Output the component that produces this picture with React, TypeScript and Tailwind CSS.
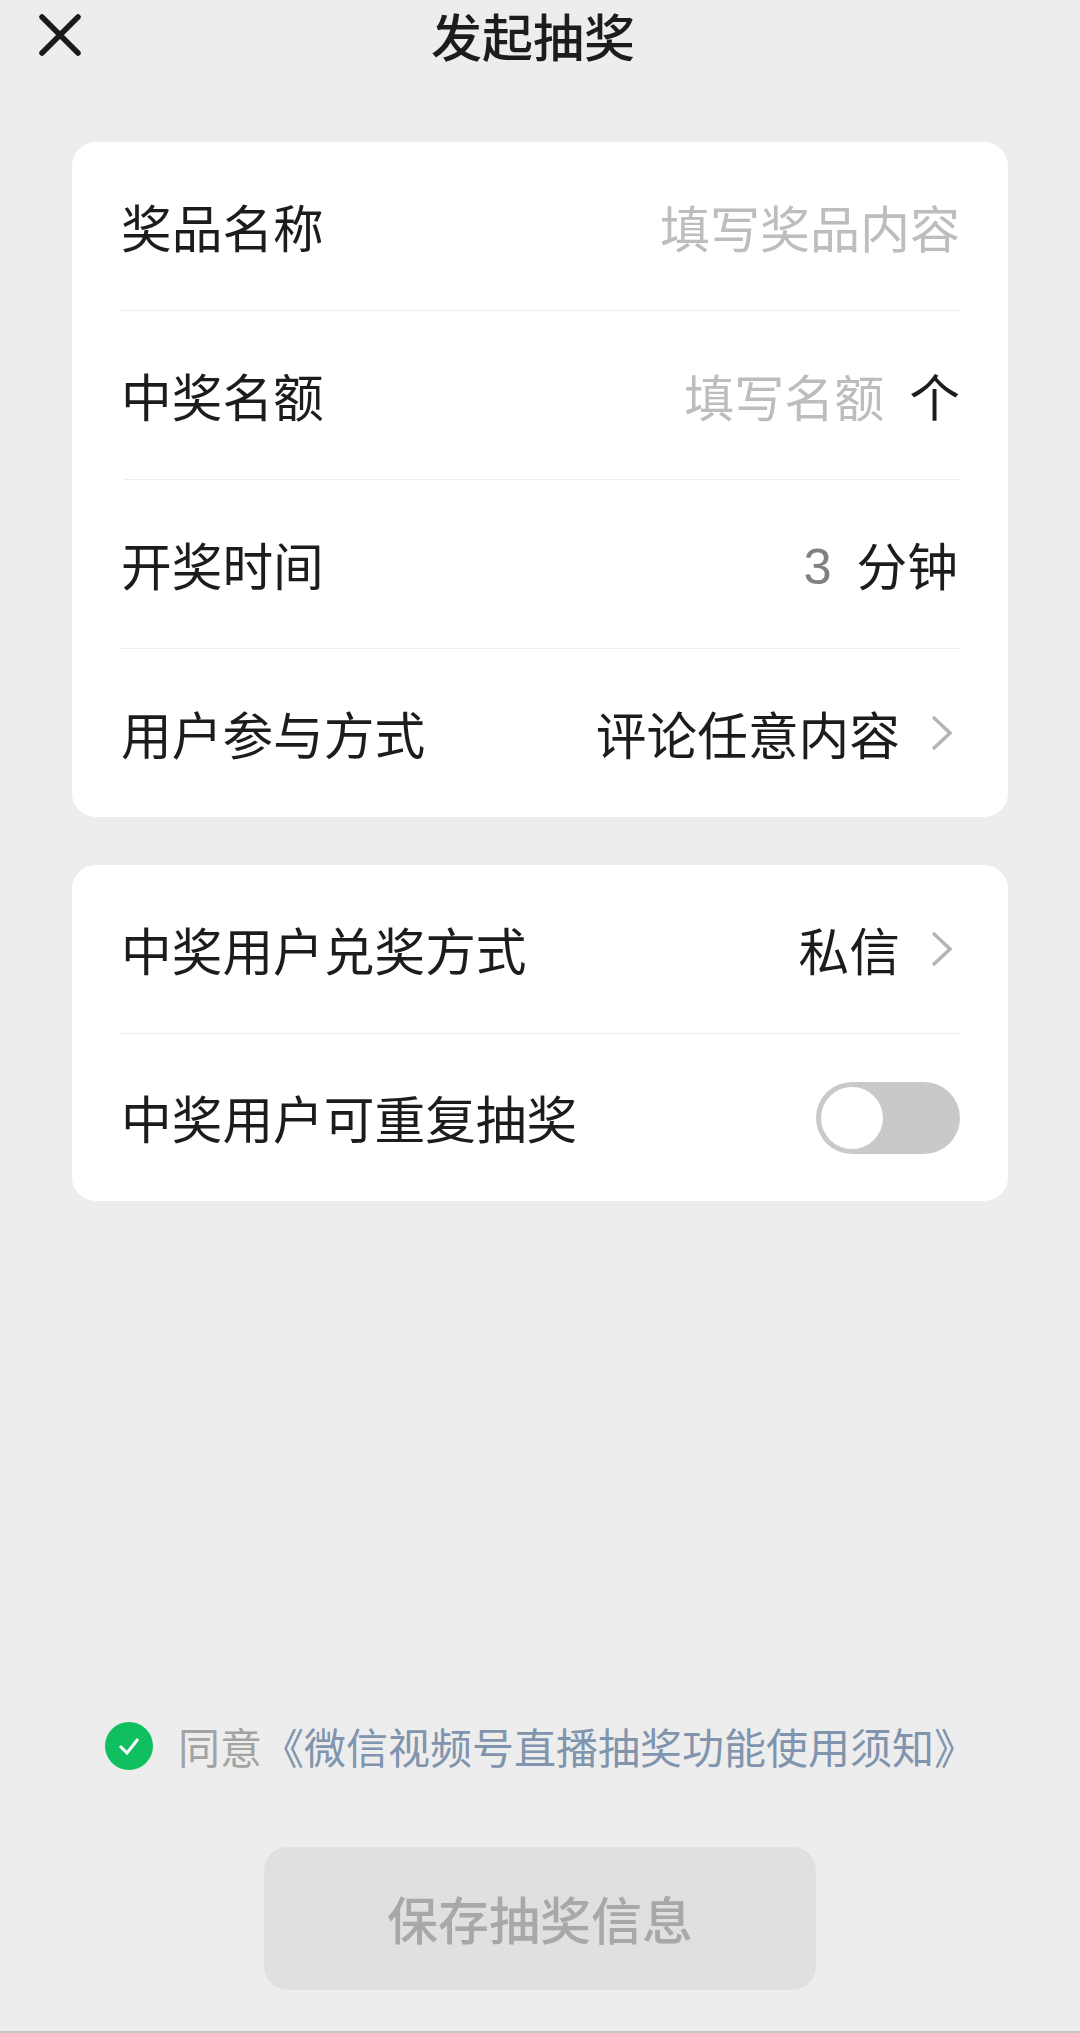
const font = { fontFamily: '"Noto Sans CJK SC", "Noto Sans", sans-serif' };

function Chevron() {
  return (
    <svg width="24" height="38" viewBox="0 0 24 38" fill="none" className="ml-[30px] mr-[6px] shrink-0">
      <path d="M3 3 L20 19 L3 35" stroke="#b4b4b4" strokeWidth="3.5" />
    </svg>
  );
}

function Row({ left, children, last, insetLeft, short }: { left: string; children?: React.ReactNode; last?: boolean; insetLeft?: boolean; short?: boolean }) {
  return (
    <div className="flex flex-col">
      <div className={`flex items-center justify-between text-[50.7px] leading-none text-[#1c1c1c] ${short ? 'h-[167px]' : 'h-[168px]'}`}>
        <span className="pl-px">{left}</span>
        <div className="flex items-center">{children}</div>
      </div>
      {!last && <div className={`h-px bg-[#eeeeee] ${insetLeft ? 'ml-[4px]' : ''}`} />}
    </div>
  );
}

export default function App() {
  return (
    <div style={font} className="flex h-[2033px] w-[1080px] flex-col overflow-hidden bg-[#ededed]">
      <header className="relative flex h-[142px] justify-center">
        <svg width="42" height="42" viewBox="0 0 42 42" fill="none" className="absolute left-[39px] top-[14px]">
          <path d="M3 3 L39 39 M39 3 L3 39" stroke="#1a1a1a" strokeWidth="5.5" strokeLinecap="round" />
        </svg>
        <h1 className="mr-[14px] mt-[10px] text-[51px] font-medium leading-[51px] text-[#1c1c1c]">发起抽奖</h1>
      </header>

      <main className="mx-[72px] flex flex-col gap-[48px]">
        <section className="rounded-[24px] bg-white px-[48px]">
          <Row left="奖品名称">
            <span className="text-[50px] text-[#bdbdbd]">填写奖品内容</span>
          </Row>
          <Row left="中奖名额" insetLeft>
            <span className="text-[50px] text-[#bdbdbd]">填写名额</span>
            <span className="ml-[25px]">个</span>
          </Row>
          <Row left="开奖时间">
            <span className="pt-[7px] text-[#808080]" style={{ fontFamily: '"Liberation Sans", sans-serif' }}>3</span>
            <span className="ml-[25px] mr-[2px]">分钟</span>
          </Row>
          <Row left="用户参与方式" last>
            <span>评论任意内容</span>
            <Chevron />
          </Row>
        </section>

        <section className="rounded-[24px] bg-white px-[48px]">
          <Row left="中奖用户兑奖方式">
            <span>私信</span>
            <Chevron />
          </Row>
          <Row left="中奖用户可重复抽奖" last short>
            <div className="flex h-[72px] w-[144px] items-center rounded-full bg-[#c9c9c9] pl-[5px]">
              <div className="h-[62px] w-[62px] rounded-full bg-white" />
            </div>
          </Row>
        </section>
      </main>

      <footer className="mt-auto flex flex-col items-center">
        <div className="flex items-center self-start pl-[105px] text-[42px] leading-none">
          <span className="flex h-[48px] w-[48px] items-center justify-center rounded-full bg-[#10c060]">
            <svg width="28" height="24" viewBox="0 0 28 24" fill="none">
              <path d="M5 12 L12 19 L23 5" stroke="white" strokeWidth="3" />
            </svg>
          </span>
          <span className="ml-[25px] text-[#a3a3a3]">同意</span>
          <span className="text-[#8094ad]">《微信视频号直播抽奖功能使用须知》</span>
        </div>
        <button className="mt-[77px] h-[143px] w-[552px] rounded-[24px] bg-[#e0e0e0] text-[51px] font-medium leading-none text-[#a8a8a8]">
          保存抽奖信息
        </button>
        <div className="mt-[41px] h-[2px] w-full bg-[#c4c4c4]" />
      </footer>
    </div>
  );
}
